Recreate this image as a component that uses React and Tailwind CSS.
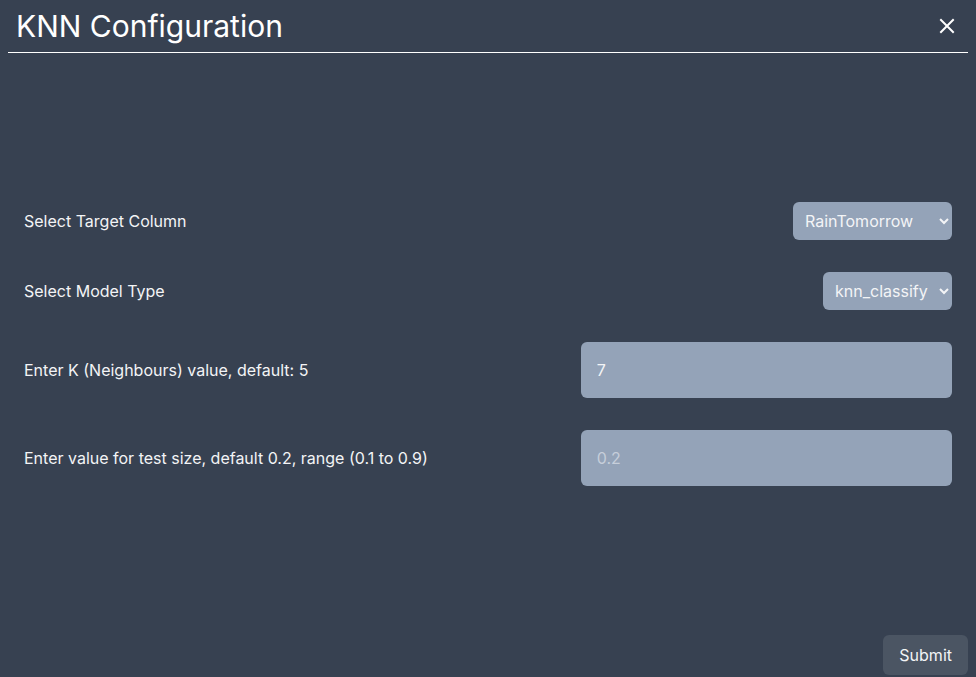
import React from "react";

export default function App() {
  return (
    <div
      className="h-screen w-full bg-[#374151] flex flex-col px-2 pt-2 pb-[2px] text-white"
      style={{ fontFamily: "Inter, 'Noto Sans', sans-serif" }}
    >
      <div className="flex items-start justify-between border-b border-white h-[45px] px-2 shrink-0">
        <h1 className="text-[30px] leading-9 text-white">KNN Configuration</h1>
        <button className="mr-[5px] mt-[10px] text-white">
          <svg width="16" height="16" viewBox="0 0 16 16" fill="none">
            <path d="M2 2L14 14M14 2L2 14" stroke="white" strokeWidth="2" strokeLinecap="square" />
          </svg>
        </button>
      </div>

      <div className="flex-1 flex flex-col justify-center px-4 gap-8">
        <div className="flex items-center justify-between">
          <label className="text-base text-gray-100">Select Target Column</label>
          <select
            defaultValue="RainTomorrow"
            className="w-[159px] h-[38px] rounded-md bg-[#94a3b8] text-gray-100 pl-2 pr-1 text-base outline-none"
          >
            <option>RainTomorrow</option>
          </select>
        </div>
        <div className="flex items-center justify-between">
          <label className="text-base text-gray-100">Select Model Type</label>
          <select
            defaultValue="knn_classify"
            className="h-[38px] rounded-md bg-[#94a3b8] text-gray-100 pl-2 pr-2 text-base outline-none"
          >
            <option>knn_classify</option>
          </select>
        </div>
        <div className="flex items-center justify-between">
          <label className="text-base text-gray-100">Enter K (Neighbours) value, default: 5</label>
          <input
            type="text"
            defaultValue="7"
            className="w-2/5 h-14 rounded-md bg-[#94a3b8] text-gray-100 px-4 text-base outline-none"
          />
        </div>
        <div className="flex items-center justify-between">
          <label className="text-base text-gray-100">
            Enter value for test size, default 0.2, range (0.1 to 0.9)
          </label>
          <input
            type="text"
            placeholder="0.2"
            className="w-2/5 h-14 rounded-md bg-[#94a3b8] text-gray-100 placeholder:text-[#c6ceda] px-4 text-base outline-none"
          />
        </div>
      </div>

      <div className="flex justify-end shrink-0">
        <button className="px-4 py-2 rounded-md bg-[#4b5563] text-gray-100 text-base leading-6">
          Submit
        </button>
      </div>
    </div>
  );
}
